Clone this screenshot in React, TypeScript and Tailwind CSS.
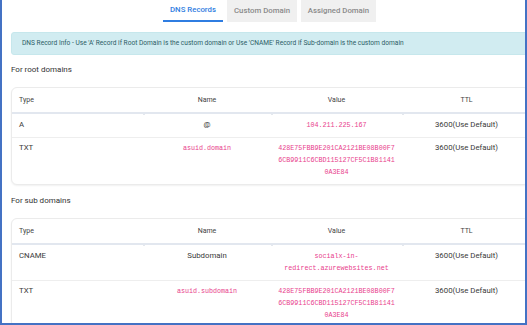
import React from "react"

type Row = {
  type: string
  name: string
  nameCode?: boolean
  value: string[]
  ttl: string
}

const rootRows: Row[] = [
  { type: "A", name: "@", value: ["104.211.225.167"], ttl: "3600(Use Default)" },
  {
    type: "TXT",
    name: "asuid.domain",
    nameCode: true,
    value: ["428E75FBB9E201CA2121BE08B00F7", "6CB9911C6CBD115127CF5C1B81141", "0A3E84"],
    ttl: "3600(Use Default)",
  },
]

const subRows: Row[] = [
  {
    type: "CNAME",
    name: "Subdomain",
    value: ["socialx-in-", "redirect.azurewebsites.net"],
    ttl: "3600(Use Default)",
  },
  {
    type: "TXT",
    name: "asuid.subdomain",
    nameCode: true,
    value: ["428E75FBB9E201CA2121BE08B00F7", "6CB9911C6CBD115127CF5C1B81141", "0A3E84"],
    ttl: "3600(Use Default)",
  },
]

const cols = "grid grid-cols-[131px_128px_131px_129px]"
const mono = "font-['Liberation_Mono','DejaVu_Sans_Mono',monospace] text-[6.7px] leading-[12px] text-[#e83e8c]"

function RecordTable({ rows }: { rows: Row[] }) {
  return (
    <div className="w-[519px] rounded-[6px] border border-[#ebebeb] bg-white shadow-[0_1px_2px_rgba(0,0,0,0.06)]">
      <div className={`${cols} h-[24px] items-center text-[7px] text-[#444]`}>
        <div className="pl-[7px]">Type</div>
        <div className="text-center">Name</div>
        <div className="text-center">Value</div>
        <div className="text-center">TTL</div>
      </div>
      <div className="h-[2px] bg-[#e2e7ef]" />
      <div className={`${cols} h-[1px]`}>
        <div />
        <div className="border-l-2 border-[#e4e8ee]" />
        <div className="border-l-2 border-[#e4e8ee]" />
        <div className="border-l-2 border-[#e4e8ee]" />
      </div>
      {rows.map((r, i) => (
        <div
          key={i}
          className={`${cols} pt-[4px] pb-[6px] text-[7.8px] leading-[12px] text-[#3a3a3a] ${i > 0 ? "border-t border-[#eeeeee]" : ""}`}
        >
          <div className="pl-[7px]">{r.type}</div>
          <div className={`text-center ${r.nameCode ? mono : ""}`}>{r.name}</div>
          <div className={`text-center ${mono}`}>
            {r.value.map((v) => (
              <div key={v}>{v}</div>
            ))}
          </div>
          <div className="text-center">{r.ttl}</div>
        </div>
      ))}
    </div>
  )
}

export default function App() {
  return (
    <div className="h-[325px] w-[527px] overflow-hidden border-x-2 border-b-2 border-[#4472c4] bg-white font-['Roboto','Liberation_Sans',sans-serif]">
      <div className="w-[540px] pl-[9px]">
        <div className="flex h-[22px] items-stretch gap-[4px] pl-[152px] text-[7.8px] font-medium">
          <div className="flex w-[60px] items-center justify-center border-b-2 border-[#2f7de1] text-[#2f7de1]">
            DNS Records
          </div>
          <div className="flex w-[70px] items-center justify-center bg-[#f0f0f0] text-[#8a8a8a]">Custom Domain</div>
          <div className="flex w-[75px] items-center justify-center bg-[#f0f0f0] text-[#8a8a8a]">Assigned Domain</div>
        </div>

        <div className="mt-[10px] flex h-[23px] items-center rounded-[3px] border border-[#c6e7ec] bg-[#d1ecf1] pl-[10px] text-[6.6px] text-[#2c5d66]">
          DNS Record Info - Use 'A' Record if Root Domain is the custom domain or Use 'CNAME' Record if Sub-domain is
          the custom domain
        </div>

        <div className="mt-[9px] text-[8px] leading-[12px] text-[#333]">For root domains</div>
        <div className="mt-[11px]">
          <RecordTable rows={rootRows} />
        </div>

        <div className="mt-[10px] text-[8px] leading-[12px] text-[#333]">For sub domains</div>
        <div className="mt-[11px]">
          <RecordTable rows={subRows} />
        </div>
      </div>
    </div>
  )
}
